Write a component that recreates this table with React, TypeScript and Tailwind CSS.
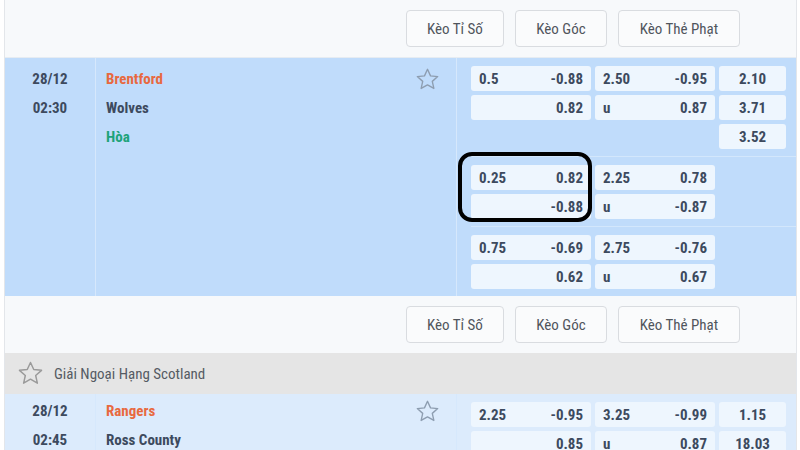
import React from 'react';

const Star = ({ className = '' }: { className?: string }) => (
  <svg viewBox="0 0 24 24" className={className} fill="none" stroke="currentColor" strokeWidth={1.3} strokeLinejoin="round">
    <path d="M12 2.2l2.9 6.3 6.9.7-5.2 4.6 1.5 6.8L12 17.1l-6.1 3.5 1.5-6.8-5.2-4.6 6.9-.7z" />
  </svg>
);

const TabButtons = () => (
  <div className="flex h-[57px] items-center gap-[11px] pl-[401px] bg-[#f7f9fb]">
    {['Kèo Tỉ Số', 'Kèo Góc', 'Kèo Thẻ Phạt'].map((label, i) => (
      <div
        key={label}
        className={`flex h-[37px] items-center justify-center rounded-[4px] border border-[#d9dce0] bg-[#fafbfc] text-[15px] text-[#50555c] ${i === 0 ? 'w-[98px]' : i === 1 ? 'w-[92px]' : 'w-[122px]'}`}
      >
        {label}
      </div>
    ))}
  </div>
);

type Cell = { l?: string; r?: string; c?: string } | null;

const OddsCell = ({ cell, wide }: { cell: Cell; wide: boolean }) => {
  if (!cell) return <div className={wide ? 'w-[120px]' : 'w-[67px]'} />;
  if (!wide)
    return (
      <div className="flex h-[25px] w-[67px] items-center justify-center rounded-[3px] bg-[#eef6fe]">{cell.c}</div>
    );
  return (
    <div className="flex h-[25px] w-[120px] items-center justify-between rounded-[3px] bg-[#eef6fe] px-[8px]">
      <span>{cell.l}</span>
      <span>{cell.r}</span>
    </div>
  );
};

const OddsGroup = ({ rows, last }: { rows: Cell[][]; last?: boolean }) => (
  <div className={`flex flex-col gap-[4px] pt-[8px] pb-[7px] ${last ? '' : 'border-b border-[#d3e7fc]'}`}>
    {rows.map((r, i) => (
      <div key={i} className="flex gap-[4px]">
        <OddsCell cell={r[0]} wide />
        <OddsCell cell={r[1]} wide />
        <OddsCell cell={r[2]} wide={false} />
      </div>
    ))}
  </div>
);

const MatchRow = ({
  bg,
  date,
  time,
  home,
  away,
  draw,
  groups,
  pt = 'pt-[8px]',
}: {
  bg: string;
  date: string;
  time: string;
  home: string;
  away: string;
  draw?: string;
  groups: Cell[][][];
  pt?: string;
}) => (
  <div className={`flex ${bg}`}>
    <div className={`w-[91px] shrink-0 border-r border-[#d6e8fc] ${pt} text-center font-bold text-[#3d4a5e]`}>
      <div className="flex h-[29px] items-start pt-[3px] justify-center">{date}</div>
      <div className="flex h-[29px] items-start pt-[3px] justify-center">{time}</div>
    </div>
    <div className={`flex flex-1 justify-between border-r border-[#d6e8fc] pl-[10px] pr-[16px] ${pt}`}>
      <div className="font-bold">
        <div className="h-[29px] pt-[3px] text-[#e8693f]">{home}</div>
        <div className="h-[29px] pt-[3px] text-[#3d4a5e]">{away}</div>
        {draw && <div className="h-[29px] pt-[3px] text-[#1ea37a]">{draw}</div>}
      </div>
      <Star className="mt-[1px] h-[25px] w-[25px] text-[#8d9db0]" />
    </div>
    <div className="w-[339px] shrink-0 pl-[14px] text-[#3d4a5e] font-bold">
      {groups.map((g, i) => (
        <OddsGroup key={i} rows={g} last={i === groups.length - 1} />
      ))}
    </div>
  </div>
);

export default function App() {
  return (
    <div className="h-[450px] w-[800px] overflow-hidden bg-white [font-family:'Roboto_Condensed','Liberation_Sans_Narrow','DejaVu_Sans_Condensed',sans-serif] text-[15px] leading-[20px]">
      <div className="relative ml-[4px] mr-[3px] border-x border-[#e3e6ea]">
        <TabButtons />
        <div className="border-t border-[#e6ecf2]" />
        <MatchRow
          bg="bg-[#c0dcfb]"
          date="28/12"
          time="02:30"
          home="Brentford"
          away="Wolves"
          draw="Hòa"
          groups={[
            [
              [{ l: '0.5', r: '-0.88' }, { l: '2.50', r: '-0.95' }, { c: '2.10' }],
              [{ r: '0.82' }, { l: 'u', r: '0.87' }, { c: '3.71' }],
              [null, null, { c: '3.52' }],
            ],
            [
              [{ l: '0.25', r: '0.82' }, { l: '2.25', r: '0.78' }, null],
              [{ r: '-0.88' }, { l: 'u', r: '-0.87' }, null],
            ],
            [
              [{ l: '0.75', r: '-0.69' }, { l: '2.75', r: '-0.76' }, null],
              [{ r: '0.62' }, { l: 'u', r: '0.67' }, null],
            ],
          ]}
        />
        <TabButtons />
        <div className="flex h-[41px] items-center gap-[10px] bg-[#e5e5e5] pl-[12px] text-[#555b63]">
          <Star className="h-[27px] w-[27px] text-[#9a9a9a]" />
          <span>Giải Ngoại Hạng Scotland</span>
        </div>
        <MatchRow
          bg="bg-[#dcebfc]"
          date="28/12"
          time="02:45"
          home="Rangers"
          away="Ross County"
          pt="pt-[4px]"
          groups={[
            [
              [{ l: '2.25', r: '-0.95' }, { l: '3.25', r: '-0.99' }, { c: '1.15' }],
              [{ r: '0.85' }, { l: 'u', r: '0.87' }, { c: '18.03' }],
            ],
          ]}
        />
        <div className="pointer-events-none absolute left-[453px] top-[152px] h-[70px] w-[134px] rounded-[14px] border-[4px] border-black" />
      </div>
    </div>
  );
}
